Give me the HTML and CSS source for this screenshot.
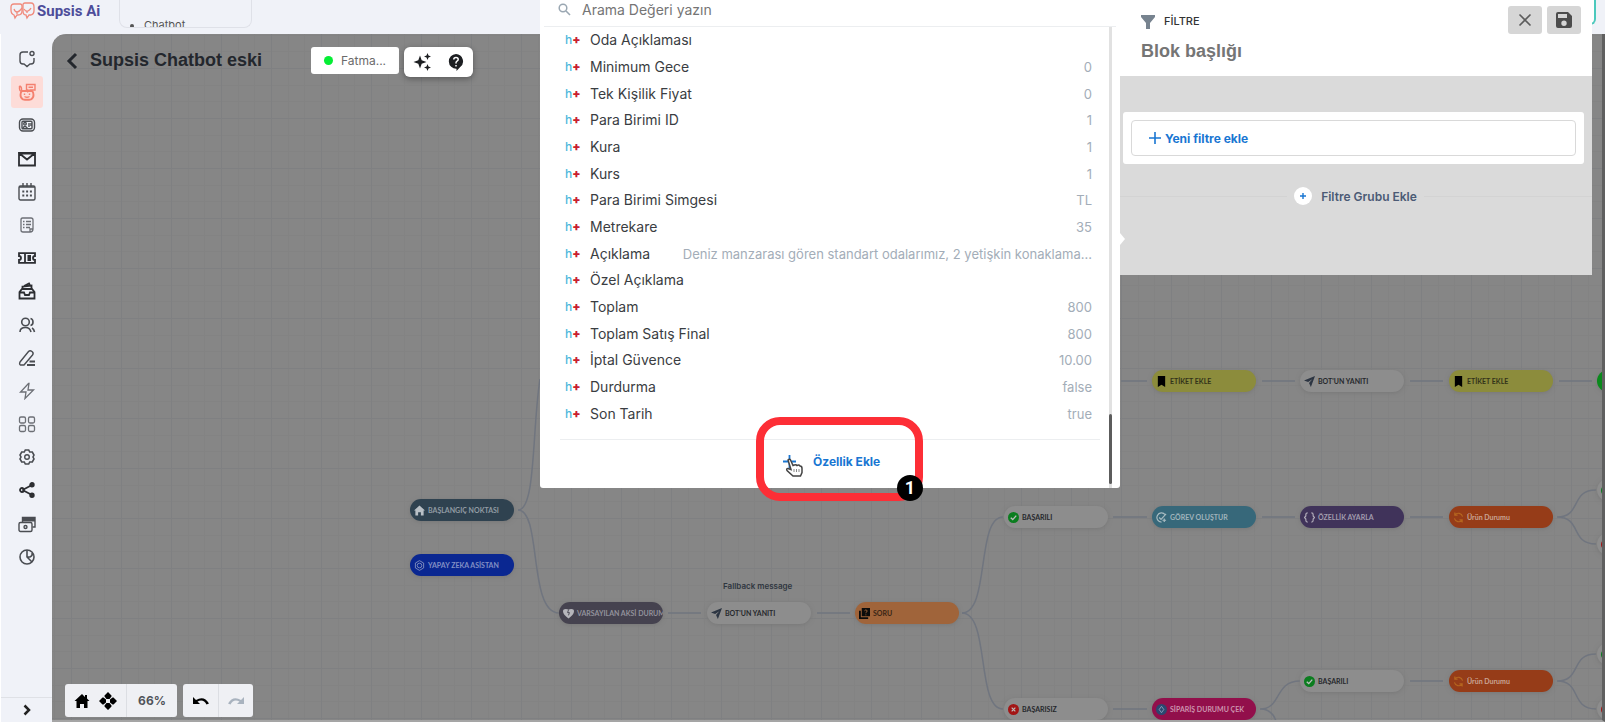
FILE: index.html
```
<!DOCTYPE html>
<html lang="tr">
<head>
<meta charset="utf-8">
<title>Supsis Ai</title>
<link rel="stylesheet" href="styles.css">
</head>
<body>
<svg class="defs" aria-hidden="true">
  <symbol id="plane" viewBox="0 0 12 12"><path d="M12 0 7.500 12 5.500 7.500 9 3.500 4.500 6.500 0 5z"/></symbol>
  <symbol id="mark" viewBox="0 0 12 12"><path d="M2 0h8v12L6 9.500 2 12z"/></symbol>
  <symbol id="ok" viewBox="0 0 12 12"><circle cx="6" cy="6" r="6" fill="#0b7d1f"/><path d="M3 6.200 5.200 8.300 9 4" fill="none" stroke="#bbb" stroke-width="1.500"/></symbol>
  <symbol id="no" viewBox="0 0 12 12"><circle cx="6" cy="6" r="6" fill="#a31515"/><path d="m4 4 4 4m0-4L4 8" fill="none" stroke="#bbb" stroke-width="1.300"/></symbol>
  <symbol id="sync" viewBox="0 0 12 12"><path d="M10.500 5A5 5 0 0 0 2 3M1.500 7A5 5 0 0 0 10 9M2 .5v3h3M10 11.500v-3H7" fill="none" stroke="#b5651f" stroke-width="1.300"/></symbol>
</svg>

<div class="app">
  <header class="topbar">
    <a class="brand" href="#">
      <svg width="25" height="18" viewBox="0 0 25 18" fill="none" stroke="#f08a7c" stroke-width="1.300"><path d="M4 2h6q2 0 2 2v5q0 4-4 4H7l-2 3-1-3Q1 12 1 8V5q0-3 3-3z"/><path d="M15 1h6q3 0 3 4v4q0 3-3 4h-2l-2 3-1-3q-3 0-3-4V3q0-2 2-2z"/><path d="M4 7q1 3 3 3t5-4M14 7q2 3 4 2t3-3M7 10v2M17 9v2"/></svg>
      <span>Supsis Ai</span>
    </a>
    <div class="crumb"><ul><li>Chatbot</li></ul></div>
    <div class="account"></div>
  </header>

  <nav class="side" aria-label="Menü">
    <div class="items">
      <a href="#" aria-label="Sohbet"><svg viewBox="0 0 18 18"><path d="M10 2H5Q2 2 2 5v6q0 3 3 3h1l3 2.500 3-2.500h1q3 0 3-3V8"/><circle cx="14" cy="3.500" r="2"/></svg></a>
      <a href="#" class="on" aria-label="Chatbot"><svg viewBox="0 0 18 18"><path d="M8.500 1.500h8.500v5.500h-5L10 8.500V7H8.500zM10.500 4.200h4.500M1.500 3v3q0 2 2 2.500M1.500 3q2.500 0 2 5"/><path d="M4 8h10q1.500 1 1.500 4T13 16.300q-4 1-8 0Q2.500 15 2.500 12T4 8z" stroke-width="1.900"/><path d="M6.500 10.500v1.500M11.500 10.500v1.500M6.500 13.500q2.500 1.500 5 0"/></svg></a>
      <a href="#" aria-label="Kişiler"><svg viewBox="0 0 18 18"><rect x="1.500" y="3" width="15" height="12" rx="3.500"/><rect x="4" y="5.300" width="10" height="7.500" rx="1"/><circle cx="7" cy="7.800" r="1.300"/><path d="M4.800 12q2-3 4.500 0M11 7v4M13 7v3"/></svg></a>
      <a href="#" class="dark" aria-label="E-posta"><svg viewBox="0 0 18 18"><path d="M1 3h16v12.500H1zM1.500 3.500h15L9 9.500z"/></svg></a>
      <a href="#" aria-label="Takvim"><svg viewBox="0 0 18 18"><rect x="1" y="3" width="16" height="14" rx="1.500"/><path d="M5 0v4M9 0v4M13 0v4M1 4h16"/><path d="M4.300 8.500h10M4.300 12.500h10" stroke-width="2" stroke-dasharray="2 1.800"/></svg></a>
      <a href="#" class="soft" aria-label="Formlar"><svg viewBox="0 0 18 18"><path d="M4.500 2H13q2 0 2 2v9q0 3-3 3H5q-2 0-2-2V4q0-2 1.500-2zM5 5.500h1.500M8 5.500h5M5 8.500h1.500M8 8.500h5M5 11.500h1.500M8 11.500h4M12 16v-3h3"/></svg></a>
      <a href="#" class="dark" aria-label="Biletler"><svg viewBox="0 0 18 18"><path d="M1 4.200h16v2.800q-2 0-2 2t2 2v2.800H1V11q2 0 2-2T1 7zM7 4v10M9.500 7H13M9.500 9H13M9.500 11H13"/></svg></a>
      <a href="#" class="dark" aria-label="Arşiv"><svg viewBox="0 0 18 18"><path d="M1.500 10 4 7h10l2.500 3v6.500h-15zM1.500 10.500H6l1 2.500h4l1-2.500h4.500M4.500 7V4.500l9-1V7M6 4l5-2.500 1 2"/></svg></a>
      <a href="#" aria-label="Ekip"><svg viewBox="0 0 18 18"><circle cx="7.500" cy="6" r="3.800" stroke-width="1.600"/><path d="M2 16q0-4.500 5.500-4.500 4.500 0 5.500 4.500M12.500 2.500Q15 3 15 6t-2.500 3.500M14 12q2 1 2.500 4" stroke-width="1.600"/></svg></a>
      <a href="#" aria-label="Düzenle"><svg viewBox="0 0 18 18"><path d="M2 13 10.500 2.500q1.500-1.500 3.500 0t.5 3.500L6 16H2.500q-1.500-.5-.5-3z"/><path d="M9 16h8M11.500 12.500H17" stroke-width="2.200"/></svg></a>
      <a href="#" class="soft" aria-label="Otomasyon"><svg viewBox="0 0 18 18"><path d="M10.500 1.500 2.500 10H8l-1 6.500L15.500 8H10l1-6.500z"/></svg></a>
      <a href="#" class="soft" aria-label="Uygulamalar"><svg viewBox="0 0 18 18"><rect x="1.500" y="2" width="6" height="6" rx="1.500"/><rect x="10.500" y="2" width="6" height="6" rx="1.500"/><rect x="1.500" y="10.500" width="6" height="6" rx="1.500"/><rect x="10.500" y="10.500" width="6" height="6" rx="1.500"/></svg></a>
      <a href="#" aria-label="Ayarlar"><svg viewBox="0 0 18 18"><path d="M7.300 2h3.400l1 2h2.600l1.700 3-1 2 1 2-1.700 3h-2.600l-1 2H7.300l-1-2H3.700L2 11l1-2-1-2 1.700-3h2.600z" stroke-width="1.600"/><circle cx="9" cy="9" r="2.300"/></svg></a>
      <a href="#" class="dark" aria-label="Paylaş"><svg viewBox="0 0 18 18"><path d="M4.500 9 14 4M4.500 9l9.500 5"/><circle cx="4" cy="9" r="2"/><circle cx="14" cy="3.800" r="1.800" fill="#333"/><circle cx="14" cy="14.200" r="1.800" fill="#333"/></svg></a>
      <a href="#" aria-label="Ödeme"><svg viewBox="0 0 18 18"><rect x="1" y="7.500" width="13" height="9" rx="1.500"/><path d="M4.500 7V2.500H17V12h-2.500"/><path d="M5 4.500h12" stroke-width="4"/><circle cx="7.500" cy="12" r="1.500"/></svg></a>
      <a href="#" aria-label="Raporlar"><svg viewBox="0 0 18 18"><g stroke-width="1.600"><circle cx="9" cy="9" r="7"/><path d="M9 2v7l5 5M9 9h3q3-1 2-4"/></g></svg></a>
    </div>
    <button class="expand" aria-label="Genişlet"><svg viewBox="0 0 18 18"><path d="m6.500 4.500 4.500 4.500-4.500 4.500"/></svg></button>
  </nav>

  <main class="canvas">
    <svg class="wires" width="1553" height="687" aria-hidden="true">
      <defs><pattern id="grid" width="50" height="50" patternUnits="userSpaceOnUse" x="19" y="34"><path d="M17.500 0v50M33.500 0v50M0 17.500h50M0 33.500h50" stroke="#838383" fill="none"/><path d="M.5 0v50M0 .5h50" stroke="#7f8082" fill="none"/></pattern></defs>
      <rect width="100%" height="100%" fill="url(#grid)"/>
      <g transform="translate(-52 -35)" fill="none" stroke="#70757f" stroke-width="1.500">
        <path d="M518 511C536 511 532 430 540 380"/>
        <path d="M518 511C542 511 528 614 559 614"/>
        <path d="M668 614h33M817 614h33"/>
        <path d="M962 614C990 614 976 518 1003 518"/>
        <path d="M962 614C990 614 976 710 1003 710"/>
        <path d="M1121 382h26M1262 382h33M1410 382h33M1559 382h33"/>
        <path d="M1113 518h34M1262 518h33M1410 518h33M1113 710h34M1410 682h33"/>
        <path d="M1557 518C1582 518 1570 491 1596 491M1557 518C1582 518 1570 545 1596 545"/>
        <path d="M1557 682C1582 682 1570 655 1596 655M1557 682C1582 682 1570 710 1596 710"/>
        <path d="M1260 710C1282 710 1274 682 1300 682M1260 710q12 0 16 12"/>
      </g>
    </svg>

    <div class="node c0 r-start navy"><svg fill="#b9c0c6" viewBox="0 0 12 12"><path d="M6 .5 0 6h1.500v5.500h3V8h3v3.500h3V6H12z"/></svg>BAŞLANGIÇ NOKTASI</div>
    <div class="node c0 r-ai blue"><svg viewBox="0 0 12 12" fill="none" stroke="#8390bd"><path d="M6 .7 10.500 3.300v5.400L6 11.300 1.500 8.700V3.300z"/><circle cx="6" cy="6" r="2.500"/></svg>YAPAY ZEKA ASİSTAN</div>
    <div class="node c1 r-main slate"><svg fill="#b5b5bb" viewBox="0 0 12 12"><path d="M6 11.500Q0 7 0 3.500 0 1 3 1q2 0 3 1 1-1 3-1 3 0 3 2.500Q12 7 6 11.500z"/><path d="m6 2-1 3h2L6 8" fill="none" stroke="#45434f"/></svg>VARSAYILAN AKSİ DURUM</div>
    <p class="note">Fallback message</p>
    <div class="node c2 r-main"><svg fill="#2c3542"><use href="#plane"/></svg>BOT'UN YANITI</div>
    <div class="node c3 r-main orange"><svg viewBox="0 0 12 12" fill="#0b0b0b"><path d="M3 0h9v9H3zM0 3h2v7h8v2H0z"/><path d="M6 3q1.500-2 3 0 0 1-1.500 2v.7M7.500 7v1" stroke="#a3653a" fill="none"/></svg>SORU</div>

    <div class="node c5 r-top yellow"><svg><use href="#mark"/></svg>ETİKET EKLE</div>
    <div class="node c6 r-top"><svg fill="#2c3542"><use href="#plane"/></svg>BOT'UN YANITI</div>
    <div class="node c7 r-top yellow"><svg><use href="#mark"/></svg>ETİKET EKLE</div>
    <div class="node c8 r-top green"></div>

    <div class="node c4 r-mid"><svg><use href="#ok"/></svg>BAŞARILI</div>
    <div class="node c5 r-mid teal"><svg viewBox="0 0 12 12" fill="none" stroke="#a9bcc2" stroke-width="1.300"><path d="M10 3A5 5 0 1 0 6 11M3.500 6l2 2L11 2M9 7v4M7 9h4"/></svg>GÖREV OLUŞTUR</div>
    <div class="node c6 r-mid purple"><svg viewBox="0 0 12 12" fill="none" stroke="#b1acba" stroke-width="1.300"><path d="M4 1Q2 1 2 3v1.500L.5 6 2 7.500V9q0 2 2 2M8 1q2 0 2 2v1.500L11.500 6 10 7.500V9q0 2-2 2"/></svg>ÖZELLİK AYARLA</div>
    <div class="node c7 r-mid rust"><svg><use href="#sync"/></svg>Ürün Durumu</div>
    <div class="node c8 r-a"><svg><use href="#ok"/></svg></div>
    <div class="node c8 r-b"><svg><use href="#no"/></svg></div>

    <div class="node c6 r-low"><svg><use href="#ok"/></svg>BAŞARILI</div>
    <div class="node c7 r-low rust"><svg><use href="#sync"/></svg>Ürün Durumu</div>
    <div class="node c8 r-c"><svg><use href="#ok"/></svg></div>
    <div class="node c4 r-end"><svg><use href="#no"/></svg>BAŞARISIZ</div>
    <div class="node c5 r-end pink"><svg viewBox="0 0 12 12"><circle cx="6" cy="6" r="6" fill="#2c4770"/><path d="M6 2.500 8.500 6 6 9.500 3.500 6z" fill="none" stroke="#8ba0bd"/></svg>SİPARİŞ DURUMU ÇEK</div>
    <div class="node c8 r-end"><svg><use href="#no"/></svg></div>

    <div class="heading">
      <button class="back" aria-label="Geri"><svg width="12" height="18" viewBox="0 0 12 18"><path d="M10 2 3 9l7 7" fill="none" stroke="#23272d" stroke-width="3"/></svg></button>
      <h1>Supsis Chatbot eski</h1>
      <button class="user"><i></i>Fatma...</button>
      <div class="tools">
        <button aria-label="Yapay zeka"><svg width="18" height="18" viewBox="0 0 18 18"><path d="M7 2.500 8.700 7.300 13.500 9 8.700 10.700 7 15.500 5.300 10.700.5 9l4.800-1.700zM14.500 0l1 2.500L18 3.500l-2.500 1-1 2.500-1-2.500-2.500-1 2.500-1zM14.500 11l1 2.500 2.500 1-2.500 1-1 2.500-1-2.500-2.500-1 2.500-1z"/></svg></button>
        <button aria-label="Yardım"><svg width="16" height="18" viewBox="0 0 16 18"><path d="M8 1a7.300 7.300 0 0 1 4 13.200L8.500 18v-2.200A7.300 7.300 0 0 1 8 1z"/><path d="M5.800 6.500q0-2 2.200-2t2.200 2q0 1-1.200 1.700T8 10v.5M8 12v1.500" fill="none" stroke="#fff" stroke-width="1.500"/></svg></button>
      </div>
    </div>

    <div class="zoombar">
      <div class="group">
        <button aria-label="Ana nokta"><svg width="16" height="16" viewBox="0 0 16 16"><path d="M8 1 .5 8h2v7H6v-4h4v4h3.500V8h2L13 5.500V2h-2v2z"/></svg></button>
        <button aria-label="Taşı"><svg width="18" height="18" viewBox="0 0 18 18"><path d="m9 0 3.500 3.500v1L10.500 7h-3l-2-2.500v-1zM9 18l3.500-3.500v-1L10.500 11h-3l-2 2.500v1zM0 9l3.500-3.500h1L7 7.500v3l-2.500 2h-1zM18 9l-3.500-3.500h-1L11 7.500v3l2.500 2h1z"/></svg></button>
        <span class="pct">66%</span>
      </div>
      <div class="group two">
        <button aria-label="Geri al"><svg width="16" height="10" viewBox="0 0 16 10"><path d="M0 1v7h7L4.500 5.500q6-3 9 3l2.500-1Q11-1 3 4z"/></svg></button>
        <button class="off" aria-label="Yinele"><svg width="16" height="10" viewBox="0 0 16 10"><path d="M16 1v7H9l2.500-2.500q-6-3-9 3L0 7.500Q5-1 13 4z"/></svg></button>
      </div>
    </div>
  </main>
</div>

<section class="filter">
  <header>
    <div class="titles">
      <p><svg width="14" height="14" viewBox="0 0 14 14"><path d="M0 0h14v2L9 8v6H5V8L0 2z" fill="#77838f"/></svg>FİLTRE</p>
      <h2>Blok başlığı</h2>
    </div>
    <button aria-label="Kapat"><svg width="14" height="14" viewBox="0 0 14 14"><path d="m1.500 1.500 11 11m0-11-11 11" stroke="#5c5c5c" stroke-width="1.600"/></svg></button>
    <button aria-label="Kaydet"><svg width="16" height="16" viewBox="0 0 16 16"><path fill-rule="evenodd" d="M2 0h10l4 4v10q0 2-2 2H2q-2 0-2-2V2q0-2 2-2zm0 2v4h9V2zm6 6.500a2.700 2.700 0 1 0 0 5.400 2.700 2.700 0 0 0 0-5.400z" fill="#4c4c4c"/></svg></button>
  </header>
  <div class="card"><button><svg width="12" height="12" viewBox="0 0 12 12"><path d="M6 0v12M0 6h12" stroke="#1976d2" stroke-width="1.600"/></svg>Yeni filtre ekle</button></div>
  <div class="addgroup"><button><span><svg width="8" height="8" viewBox="0 0 8 8"><path d="M4 1v6M1 4h6" stroke="#1976d2" stroke-width="1.400"/></svg></span>Filtre Grubu Ekle</button></div>
</section>

<section class="picker">
  <label class="search"><svg width="13" height="13" viewBox="0 0 13 13"><circle cx="5" cy="5" r="3.800" fill="none" stroke="#9aa7b2" stroke-width="1.500"/><path d="m8 8 4 4" stroke="#9aa7b2" stroke-width="1.600"/></svg><input type="text" placeholder="Arama Değeri yazın" aria-label="Arama Değeri yazın"></label>
  <ul class="props">
    <li><span class="hp">h<b>+</b></span><span>Oda Açıklaması</span><em></em></li>
    <li><span class="hp">h<b>+</b></span><span>Minimum Gece</span><em>0</em></li>
    <li><span class="hp">h<b>+</b></span><span>Tek Kişilik Fiyat</span><em>0</em></li>
    <li><span class="hp">h<b>+</b></span><span>Para Birimi ID</span><em>1</em></li>
    <li><span class="hp">h<b>+</b></span><span>Kura</span><em>1</em></li>
    <li><span class="hp">h<b>+</b></span><span>Kurs</span><em>1</em></li>
    <li><span class="hp">h<b>+</b></span><span>Para Birimi Simgesi</span><em>TL</em></li>
    <li><span class="hp">h<b>+</b></span><span>Metrekare</span><em>35</em></li>
    <li><span class="hp">h<b>+</b></span><span>Açıklama</span><em>Deniz manzarası gören standart odalarımız, 2 yetişkin konaklama...</em></li>
    <li><span class="hp">h<b>+</b></span><span>Özel Açıklama</span><em></em></li>
    <li><span class="hp">h<b>+</b></span><span>Toplam</span><em>800</em></li>
    <li><span class="hp">h<b>+</b></span><span>Toplam Satış Final</span><em>800</em></li>
    <li><span class="hp">h<b>+</b></span><span>İptal Güvence</span><em>10.00</em></li>
    <li><span class="hp">h<b>+</b></span><span>Durdurma</span><em>false</em></li>
    <li><span class="hp">h<b>+</b></span><span>Son Tarih</span><em>true</em></li>
  </ul>
  <button class="add"><svg width="13" height="13" viewBox="0 0 13 13"><path d="M6.500 0v13M0 6.500h13" stroke="#1976d2" stroke-width="1.800"/></svg>Özellik Ekle</button>
  <div class="scroll"><i></i></div>
  <div class="callout"><b>1</b></div>
  <svg class="hand" width="18" height="20" viewBox="0 0 18 20"><path d="M3 2q2-2 3 1l2 4.500q3-1.500 4 0 2-1 3 .5 2 0 2 2.500v4L15.500 18H8l-6-5.500q-1-2 1-2l3 1z" fill="#fff" stroke="#444" stroke-width="1.500"/><path d="M9 11v3M11.500 11v3M14 11v3" stroke="#888"/></svg>
</section>
</body>
</html>
```
FILE: styles.css
```
* { box-sizing: border-box; }
body { margin: 0; font-family: Inter, "Open Sans", sans-serif; font-size: 14px; color: #333; position: relative; overflow: hidden; }
button { font: inherit; color: inherit; border: 0; background: none; padding: 0; display: flex; align-items: center; }
ul, p, h1, h2 { margin: 0; padding: 0; }
a { color: inherit; text-decoration: none; }
.defs { position: absolute; width: 0; height: 0; }

.app { height: 100vh; display: grid; grid-template: 34px 1fr / 52px 1fr; background: #f0f2f8; }

.topbar { grid-column: 1 / 3; display: flex; align-items: flex-start; padding-left: 10px; overflow: hidden; }
.brand { display: flex; align-items: center; gap: 2px; height: 22px; width: 109px; font: bold 15px/22px Roboto, sans-serif; color: #4d4d9a; white-space: nowrap; }
.crumb { width: 133px; height: 28px; border: 1px solid #dfe1e8; border-top: 0; border-radius: 0 0 8px 8px; overflow: hidden; padding: 16px 0 0 12px; font-size: 11px; line-height: 18px; color: #555; }
.crumb ul { list-style: disc; padding-left: 12px; white-space: nowrap; }
.account { margin-left: auto; margin-right: 9px; width: 40px; height: 25px; border: 2px solid #4cc9bd; border-top: 0; border-radius: 0 0 6px 6px; background: #fff; }

.side { display: flex; flex-direction: column; justify-content: space-between; border-left: 1px solid #fff; padding-top: 9px; }
.items { height: 530px; display: flex; flex-direction: column; align-items: center; justify-content: space-between; }
.items a { width: 32px; height: 32px; display: flex; align-items: center; justify-content: center; border-radius: 3px; }
.side svg { width: 18px; height: 18px; fill: none; stroke: #4a4d52; stroke-width: 1.4; }
.side .dark svg { stroke: #2c2e32; stroke-width: 1.8; }
.side .soft svg { stroke: #6c6f75; stroke-width: 1.3; }
.side .on { background: #fddcd8; }
.side .on svg { stroke: #f4806f; }
.side .expand { width: 100%; height: 25px; justify-content: center; border-top: 1px solid #dfe1e6; }
.side .expand svg { stroke: #222; stroke-width: 2.5; }

.canvas { position: relative; overflow: hidden; background: #868686; border-radius: 14px 0 0 0; border-right: 3px solid #606060; border-bottom: 2px solid #a5a5a5; }
.wires { position: absolute; left: 0; top: 0; }

.node { position: absolute; width: 104px; height: 22px; border-radius: 11px; display: flex; align-items: center; gap: 3px; padding-left: 4px; overflow: hidden; white-space: nowrap; font: bold 7px/12px Lato, sans-serif; color: #26282c; background: #8d8d8d; box-shadow: 0 1px 4px #787878; }
.node svg { width: 11px; height: 11px; flex: none; }
.c0 { left: 358px; } .c1 { left: 507px; } .c2 { left: 655px; } .c3 { left: 803px; }
.c4 { left: 952px; } .c5 { left: 1100px; } .c6 { left: 1248px; } .c7 { left: 1397px; } .c8 { left: 1545px; }
.r-top { top: 336px; } .r-a { top: 445px; } .r-start { top: 465px; } .r-mid { top: 472px; } .r-b { top: 499px; }
.r-ai { top: 520px; } .r-main { top: 568px; } .r-c { top: 609px; } .r-low { top: 636px; } .r-end { top: 664px; }
.navy { background: #2f4250; color: #929ca4; }
.blue { background: #0a2791; color: #8390c4; }
.slate { background: #45424f; color: #93929c; }
.orange { background: #a0643a; color: #3a2616; }
.yellow { background: #8c8c3c; color: #33331a; }
.green { background: #0a8a1c; }
.teal { background: #37687a; color: #a0b4bc; }
.purple { background: #40335a; color: #a29cae; }
.rust { background: #963c18; color: #c9a594; }
.pink { background: #920f4b; color: #cc93ae; }
.note { position: absolute; left: 671px; top: 546px; font-size: 8px; line-height: 12px; font-weight: 600; color: #2f3640; }

.heading { position: absolute; left: 14px; top: 13px; display: flex; align-items: flex-start; }
.back { height: 27px; width: 24px; }
.heading h1 { width: 221px; font: bold 18px/27px "Liberation Sans", Arial, sans-serif; color: #23272d; white-space: nowrap; }
.user { width: 88px; height: 27px; background: #fff; border-radius: 3px; padding-left: 13px; gap: 8px; font-size: 12px; color: #6b6b6b; margin-right: 5px; }
.user i { width: 9px; height: 9px; border-radius: 50%; background: #05ee35; }
.tools { display: flex; width: 69px; height: 30px; background: #fff; border-radius: 6px; justify-content: space-around; box-shadow: 0 2px 6px #0005; }
.tools svg { fill: #1d1f22; }

.zoombar { position: absolute; left: 13px; bottom: 3px; display: flex; gap: 6px; }
.group { display: flex; align-items: center; height: 33px; background: #eff0f4; border-radius: 3px; padding-left: 9px; gap: 9px; }
.pct { width: 51px; line-height: 33px; border-left: 1px solid #dcdee3; text-align: center; font-size: 12px; font-weight: 700; color: #50535a; }
.two { padding: 0; gap: 0; }
.two button { width: 35px; height: 33px; justify-content: center; }
.two .off { border-left: 1px solid #dcdee3; fill: #a9b3bf; }

.filter { position: absolute; top: 0; right: 13px; width: 473px; background: #dadada; padding-bottom: 70px; }
.filter header { display: flex; align-items: flex-start; gap: 5px; height: 76px; padding: 6px 11px 0 22px; background: #fff; }
.titles { flex: 1; }
.titles p { display: flex; align-items: center; gap: 9px; font-size: 11px; line-height: 31px; font-weight: 500; }
.titles h2 { font: bold 18px/28px "Liberation Sans", Arial, sans-serif; color: #757575; }
.filter header button { width: 34px; height: 28px; background: #d6d6d6; border-radius: 3px; justify-content: center; }
.card { margin: 36px 8px 0 4px; background: #fff; border-radius: 3px; padding: 8px; }
.card button { width: 100%; height: 36px; border: 1px solid #d9d9d9; border-radius: 4px; padding-left: 17px; gap: 4px; color: #1976d2; font-size: 12px; font-weight: 700; }
.addgroup { display: flex; align-items: center; gap: 7px; margin-top: 23px; }
.addgroup::before, .addgroup::after { content: ""; flex: 1; height: 1px; background: #d3d3d3; }
.addgroup button { gap: 9px; color: #4b5a75; font-size: 12px; font-weight: 600; }
.addgroup span { width: 18px; height: 18px; border-radius: 50%; background: #fff; display: flex; align-items: center; justify-content: center; }

.picker { position: absolute; top: 0; right: 485px; width: 580px; height: 488px; background: #fff; border-radius: 0 0 3px 3px; display: flex; flex-direction: column; }
.picker::after { content: ""; position: absolute; right: -5px; top: 233px; border: solid transparent; border-width: 6px 0 6px 5px; border-left-color: #fff; }
.search { display: flex; align-items: center; gap: 11px; height: 27px; margin: 0 4px; padding: 0 0 7px 14px; border-bottom: 1px solid #eceef0; }
.search input { flex: 1; border: 0; padding: 0; outline: 0; font: 14px/20px Inter, sans-serif; }
.search input::placeholder { color: #757575; opacity: 1; }
.props { flex: 1; margin: 0 20px; padding: 0 8px 12px 5px; list-style: none; display: flex; flex-direction: column; border-bottom: 1px solid #eceef0; }
.props li { flex: 1; display: flex; align-items: center; line-height: 20px; white-space: nowrap; color: #3a3d42; }
.props em { margin-left: auto; font-style: normal; font-size: 13px; color: #a3adb8; }
.hp { display: flex; align-items: center; width: 25px; font-size: 12px; line-height: 12px; font-weight: 500; color: #4db8dc; }
.hp b { color: #c8202f; font-size: 12px; font-weight: 900; }
.add { height: 48px; padding: 0 0 6px 243px; gap: 17px; color: #1976d2; font-size: 12px; font-weight: 700; }
.scroll { position: absolute; right: 8px; top: 27px; bottom: 0; width: 3px; background: #e1e1e1; display: flex; align-items: flex-end; padding-bottom: 4px; }
.scroll i { width: 3px; height: 70px; border-radius: 2px; background: #5c5c5c; }
.callout { position: absolute; left: 216px; top: 417px; width: 167px; height: 84px; border: 8px solid #fd2e36; border-radius: 24px; }
.callout b { position: absolute; right: -8px; bottom: -8px; width: 26px; height: 26px; border-radius: 50%; background: #000; color: #fff; font: bold 18px/26px Roboto, sans-serif; text-align: center; }
.hand { position: absolute; left: 245px; top: 458px; }
```
